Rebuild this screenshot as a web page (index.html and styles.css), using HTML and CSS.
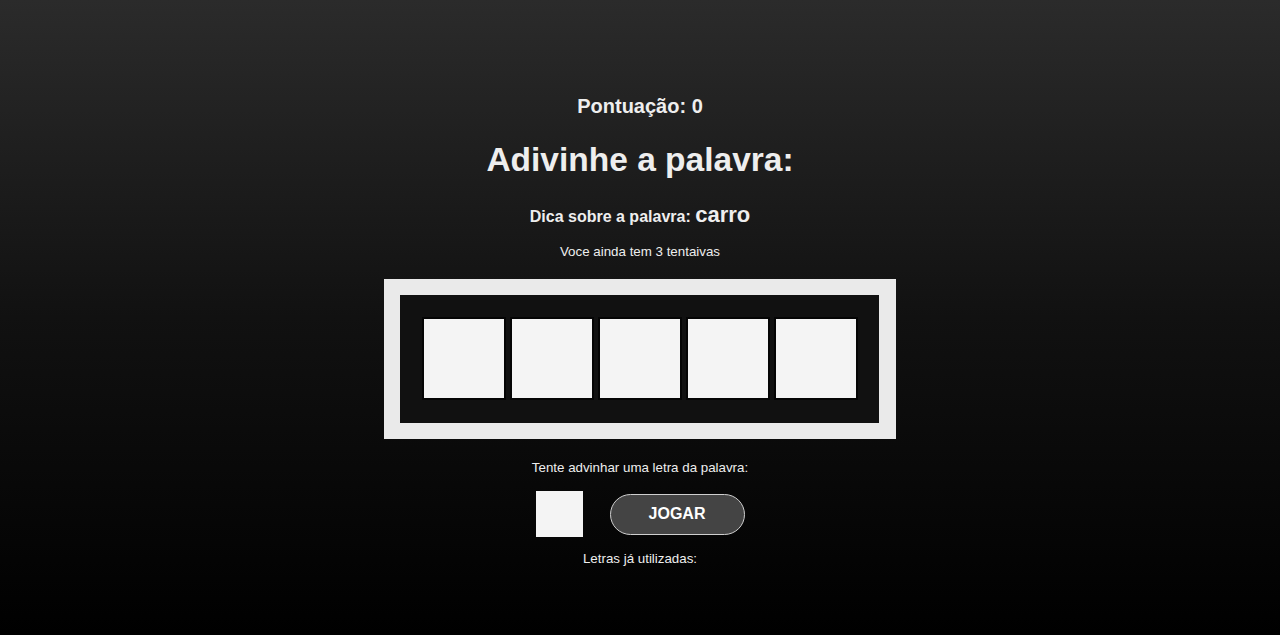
FILE: index.html
```html
<!DOCTYPE html>
<html lang="pt">
<head>
<meta charset="utf-8">
<title>Adivinhe a palavra</title>
<link rel="stylesheet" href="styles.css">
</head>
<body>
<main class="game">
  <p class="score">Pontuação: 0</p>
  <h1 class="title">Adivinhe a palavra:</h1>
  <p class="hint">Dica sobre a palavra: <span class="hint-word">carro</span></p>
  <p class="tries">Voce ainda tem 3 tentaivas</p>
  <div class="board">
    <div class="board-inner">
      <div class="tile"></div>
      <div class="tile"></div>
      <div class="tile"></div>
      <div class="tile"></div>
      <div class="tile"></div>
    </div>
  </div>
  <p class="prompt">Tente advinhar uma letra da palavra:</p>
  <div class="controls">
    <input class="letter" type="text" maxlength="1">
    <button class="play" type="button">JOGAR</button>
  </div>
  <p class="used">Letras já utilizadas:</p>
</main>
</body>
</html>
```

FILE: styles.css
```css
html, body {
  margin: 0;
  height: 100%;
}
body {
  background: linear-gradient(to bottom, #2b2b2b 0%, #111 50%, #000 100%);
  color: #eeeeee;
  font-family: "Liberation Sans", Arial, sans-serif;
}
.game {
  display: flex;
  flex-direction: column;
  align-items: center;
  padding-top: 95px;
}
.score {
  margin: 0;
  font-size: 20px;
  font-weight: bold;
  line-height: 23px;
}
.title {
  margin: 23px 0 0;
  font-size: 33.5px;
  font-weight: bold;
  line-height: 37px;
}
.hint {
  margin: 24px 0 0;
  font-size: 16px;
  font-weight: bold;
  line-height: 26px;
}
.hint-word {
  font-size: 22px;
}
.tries {
  margin: 14px 0 0;
  font-size: 13.333px;
  line-height: 15px;
}
.board {
  margin-top: 20px;
  background: #eaeaea;
  padding: 16px 17px 16px 16px;
}
.board-inner {
  background: #111;
  display: flex;
  gap: 4px;
  padding: 22px 21px 23px 22px;
}
.tile {
  width: 80px;
  height: 79px;
  background: #f4f4f4;
  border: 2px solid #050505;
}
.prompt {
  margin: 21px 0 0;
  font-size: 13.333px;
  line-height: 15px;
}
.controls {
  margin-top: 16px;
  display: flex;
  align-items: center;
  gap: 27px;
}
.letter {
  box-sizing: border-box;
  width: 47px;
  height: 46px;
  margin: 0;
  border: none;
  background: #f4f4f4;
  font-family: inherit;
  font-size: 20px;
  text-align: center;
}
.play {
  box-sizing: border-box;
  width: 135px;
  height: 41px;
  margin: 0;
  border: 1px solid #cfcfcf;
  border-radius: 21px;
  background: #444;
  color: #fff;
  font-family: inherit;
  font-size: 16px;
  font-weight: bold;
}
.used {
  margin: 14px 0 0;
  font-size: 13.333px;
  line-height: 15px;
}
```
